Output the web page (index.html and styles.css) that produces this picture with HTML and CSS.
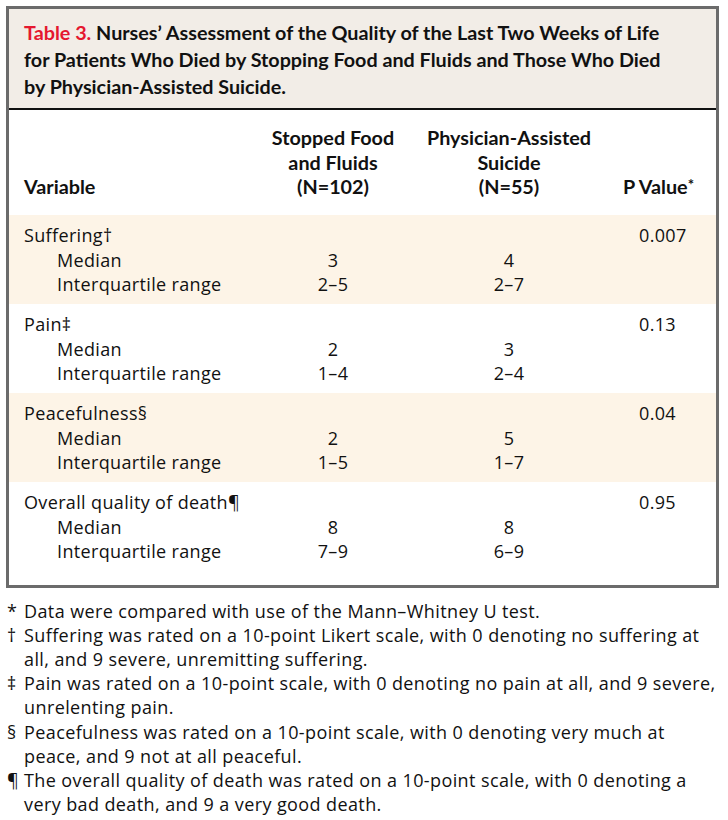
FILE: index.html
```html
<!DOCTYPE html>
<html lang="en">
<head>
<meta charset="utf-8">
<title>Table 3</title>
<link rel="stylesheet" href="styles.css">
</head>
<body>
<div class="box">
  <div class="caption"><span class="label">Table 3.</span> Nurses’ Assessment of the Quality of the Last Two Weeks of Life<br>for Patients Who Died by Stopping Food and Fluids and Those Who Died<br>by Physician-Assisted Suicide.</div>
  <table class="data">
    <colgroup>
      <col class="c0"><col class="c1"><col class="c2"><col class="c3">
    </colgroup>
    <thead>
      <tr>
        <th class="var">Variable</th>
        <th class="num">Stopped Food<br>and Fluids<br>(N=102)</th>
        <th class="num">Physician-Assisted<br>Suicide<br>(N=55)</th>
        <th class="pv">P Value<span class="ast">*</span></th>
      </tr>
    </thead>
    <tbody class="shade">
      <tr><td>Suffering†</td><td></td><td></td><td class="p">0.007</td></tr>
      <tr><td class="ind">Median</td><td class="num">3</td><td class="num">4</td><td></td></tr>
      <tr><td class="ind">Interquartile range</td><td class="num">2–5</td><td class="num">2–7</td><td></td></tr>
    </tbody>
    <tbody>
      <tr><td>Pain‡</td><td></td><td></td><td class="p">0.13</td></tr>
      <tr><td class="ind">Median</td><td class="num">2</td><td class="num">3</td><td></td></tr>
      <tr><td class="ind">Interquartile range</td><td class="num">1–4</td><td class="num">2–4</td><td></td></tr>
    </tbody>
    <tbody class="shade">
      <tr><td>Peacefulness§</td><td></td><td></td><td class="p">0.04</td></tr>
      <tr><td class="ind">Median</td><td class="num">2</td><td class="num">5</td><td></td></tr>
      <tr><td class="ind">Interquartile range</td><td class="num">1–5</td><td class="num">1–7</td><td></td></tr>
    </tbody>
    <tbody>
      <tr><td>Overall quality of death¶</td><td></td><td></td><td class="p">0.95</td></tr>
      <tr><td class="ind">Median</td><td class="num">8</td><td class="num">8</td><td></td></tr>
      <tr><td class="ind">Interquartile range</td><td class="num">7–9</td><td class="num">6–9</td><td></td></tr>
    </tbody>
  </table>
</div>
<div class="notes">
  <p><span class="sym">*</span>Data were compared with use of the Mann–Whitney U test.</p>
  <p><span class="sym">†</span>Suffering was rated on a 10-point Likert scale, with 0 denoting no suffering at<br>all, and 9 severe, unremitting suffering.</p>
  <p><span class="sym">‡</span>Pain was rated on a 10-point scale, with 0 denoting no pain at all, and 9 severe,<br>unrelenting pain.</p>
  <p><span class="sym">§</span>Peacefulness was rated on a 10-point scale, with 0 denoting very much at<br>peace, and 9 not at all peaceful.</p>
  <p><span class="sym">¶</span>The overall quality of death was rated on a 10-point scale, with 0 denoting a<br>very bad death, and 9 a very good death.</p>
</div>
</body>
</html>
```

FILE: styles.css
```css
html, body {
  margin: 0;
  padding: 0;
  background: #ffffff;
}
body {
  font-family: "Open Sans", "Lato", sans-serif;
  color: #111111;
  padding: 6px 0 0 6px;
}
.box {
  width: 707px;
  border: 3px solid #6b6b6b;
  padding-bottom: 14px;
}
.caption {
  background: #f2ede7;
  border-bottom: 2px solid #111111;
  padding: 10px 0 8px 15px;
  font-family: "Lato", sans-serif;
  font-size: 19.75px;
  line-height: 27px;
  font-weight: 700;
  color: #111111;
  white-space: nowrap;
}
.label {
  color: #e5172f;
}
.data {
  width: 707px;
  border-collapse: collapse;
  table-layout: fixed;
  font-size: 18px;
  letter-spacing: 0.35px;
  line-height: 24.5px;
}
.c0 { width: 236px; }
.c1 { width: 176px; }
.c2 { width: 176px; }
.c3 { width: 119px; }
.data th {
  font-family: "Lato", sans-serif;
  font-size: 19.8px;
  letter-spacing: 0;
  font-weight: 700;
  vertical-align: bottom;
  padding: 15px 0 16px 0;
  white-space: nowrap;
}
.data th.var {
  text-align: left;
  padding-left: 15px;
}
.data th.num {
  text-align: center;
}
.data th.pv {
  text-align: left;
  padding-left: 26px;
}
.ast {
  font-size: 15px;
  vertical-align: 4px;
  line-height: 0;
}
.data td {
  padding: 0;
  white-space: nowrap;
}
.data td:first-child {
  padding-left: 15px;
}
.data td.ind {
  padding-left: 48px;
}
.data td.num {
  text-align: center;
}
.data td.p {
  padding-left: 42px;
}
.data tbody tr:first-child td {
  padding-top: 8.5px;
}
.data tbody tr:last-child td {
  padding-bottom: 7px;
}
.shade {
  background: #fdf4e7;
}
.notes {
  margin-top: 11px;
  font-size: 18px;
  letter-spacing: 0.4px;
  line-height: 24.2px;
  width: 722px;
}
.notes p {
  margin: 0;
  padding-left: 18px;
  position: relative;
  white-space: nowrap;
}
.sym {
  position: absolute;
  left: 1px;
  top: 0;
}
```
